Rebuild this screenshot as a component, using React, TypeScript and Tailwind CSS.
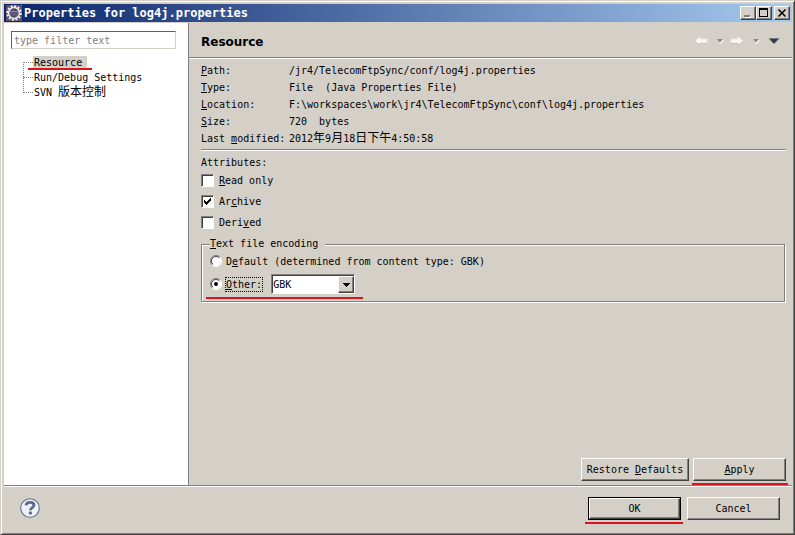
import { useState, type ReactNode } from "react";

const raised =
  "bg-[#d4d0c8] border border-t-white border-l-white border-r-[#404040] border-b-[#404040] shadow-[inset_-1px_-1px_0_#808080]";
const sunken =
  "bg-white border border-t-[#808080] border-l-[#808080] border-r-white border-b-white shadow-[inset_1px_1px_0_#404040]";

const properties = [
  { key: "P", before: "", after: "ath:", value: "/jr4/TelecomFtpSync/conf/log4j.properties" },
  { key: "T", before: "", after: "ype:", value: "File  (Java Properties File)" },
  {
    key: "L",
    before: "",
    after: "ocation:",
    value: "F:\\workspaces\\work\\jr4\\TelecomFtpSync\\conf\\log4j.properties",
  },
  { key: "S", before: "", after: "ize:", value: "720  bytes" },
  { key: "m", before: "Last ", after: "odified:", value: "2012年9月18日下午4:50:58" },
];

// Chinese characters are two columns wide, so they get a larger size
function Mixed({ text }: { text: string }) {
  return (
    <>
      {text.split(/([\u4e00-\u9fff]+)/).map((part, i) =>
        i % 2 ? (
          <span key={i} className="text-[12px]">
            {part}
          </span>
        ) : (
          part
        )
      )}
    </>
  );
}

function RedLine({ className }: { className: string }) {
  return <span aria-hidden="true" className={`absolute h-[2px] bg-[#d8141c] ${className}`} />;
}

function Separator() {
  return <div className="h-[2px] shrink-0 border-t border-b border-t-[#808080] border-b-white" />;
}

function EclipseIcon() {
  return (
    <svg viewBox="0 0 16 16" className="w-4 h-4 shrink-0">
      <rect width="16" height="16" fill="#5a5272" />
      <circle cx="8" cy="8" r="6.8" fill="none" stroke="#f6f0e6" strokeWidth="2" strokeDasharray="2 1.56" />
      <circle cx="8" cy="8" r="5.4" fill="#4a4468" stroke="#f0ebe4" strokeWidth="1.5" />
      <path d="M4.2 6.4h7.6" stroke="#a09ab4" strokeWidth="1" />
      <path d="M3.8 8.2h8.4M4.2 9.9h7.6" stroke="#77708f" strokeWidth="0.8" />
    </svg>
  );
}

function TitleBar() {
  const button = `${raised} h-[14px] flex items-center justify-center`;
  return (
    <header className="h-[18px] shrink-0 flex items-center px-[2px] bg-linear-to-r/srgb from-[#0a246a] to-[#a6caf0]">
      <EclipseIcon />
      <h1 className="flex-1 pl-[2px] text-[12px] leading-[18px] font-bold text-white whitespace-nowrap">
        Properties for log4j.properties
      </h1>
      <div className="flex">
        <button aria-label="Minimize" className={`${button} w-4`}>
          <svg viewBox="0 0 12 10" className="w-3 h-[10px]">
            <path d="M3 8h6v2H3z" fill="#fff" />
            <path d="M2 7h6v2H2z" fill="#808080" />
          </svg>
        </button>
        <button aria-label="Maximize" className={`${button} w-4`}>
          <svg viewBox="0 0 12 10" className="w-3 h-[10px]" shapeRendering="crispEdges">
            <path d="M1 0h9v9H1zM2 2v6h7V2z" fillRule="evenodd" fill="#000" />
          </svg>
        </button>
        <button aria-label="Close" className={`${button} w-4 ml-[2px]`}>
          <svg viewBox="0 0 12 10" className="w-3 h-[10px]">
            <path d="M2.5 1.5l7 7M9.5 1.5l-7 7" stroke="#000" strokeWidth="1.6" />
          </svg>
        </button>
      </div>
    </header>
  );
}

function Sidebar() {
  return (
    <aside className="w-[184px] shrink-0 bg-white pt-2 pl-[7px] pr-3">
      <input
        type="text"
        aria-label="Filter"
        placeholder="type filter text"
        className="block w-full h-[18px] px-[2px] bg-white border border-t-[#606060] border-l-[#606060] border-r-[#d4d0c8] border-b-[#d4d0c8] placeholder:text-[#808080] outline-none"
      />
      <ul className="relative mt-[6px] ml-3 leading-[15px]">
        <li className="relative flex items-center h-[15px]">
          <span className="w-[10px] border-t border-dotted border-[#808080]" />
          <a href="#resource" className="h-[14px] leading-[14px] pl-[1px] pr-[5px] bg-[#d4d0c8]">
            Resource
          </a>
          <RedLine className="left-[5px] top-[13px] w-16" />
        </li>
        <li className="flex items-center h-[15px]">
          <span className="w-[10px] border-t border-dotted border-[#808080]" />
          <a href="#run-debug" className="pl-[1px]">
            Run/Debug Settings
          </a>
        </li>
        <li className="flex items-center h-[15px]">
          <span className="w-[10px] border-t border-dotted border-[#808080]" />
          <a href="#svn" className="pl-[1px]">
            <Mixed text="SVN 版本控制" />
          </a>
        </li>
        <li aria-hidden="true" className="absolute left-0 top-[7px] bottom-[7px] border-l border-dotted border-[#808080]" />
      </ul>
    </aside>
  );
}

function Chevron() {
  return (
    <svg viewBox="0 0 8 6" className="w-2 h-[6px]">
      <path d="M3.5 5.4L7 1.4v1.4L4.6 5.6z" fill="#fff" stroke="#fff" strokeWidth="0.6" />
      <path d="M1 1h6L4 4.6z" fill="#8a8784" />
    </svg>
  );
}

function PageHeader() {
  return (
    <div className="h-[34px] shrink-0 flex items-center justify-between pl-3 pr-3">
      <h2 className="pt-[3px] font-['DejaVu_Sans','Liberation_Sans',sans-serif] text-[12px] leading-[18px] font-bold">
        Resource
      </h2>
      <div className="flex items-center pt-[2px]">
        <button aria-label="Back">
          <svg viewBox="0 0 14 12" className="w-[14px] h-3">
            <path d="M1 6l5-4.6V4h7v4H6v2.6z" fill="#f8f7f4" stroke="#e9e6e0" strokeWidth="0.8" />
            <path d="M1.4 6.6l4.4 4.2V8.4H13" fill="none" stroke="#bdb9b1" strokeWidth="0.8" />
          </svg>
        </button>
        <button aria-label="Back history" className="ml-2">
          <Chevron />
        </button>
        <button aria-label="Forward" className="ml-[6px]">
          <svg viewBox="0 0 14 12" className="w-[14px] h-3">
            <path d="M13 6L8 1.4V4H1v4h7v2.6z" fill="#f8f7f4" stroke="#e9e6e0" strokeWidth="0.8" />
            <path d="M1 8.4h7.2v2.4l4.4-4.2" fill="none" stroke="#bdb9b1" strokeWidth="0.8" />
          </svg>
        </button>
        <button aria-label="Forward history" className="ml-2">
          <Chevron />
        </button>
        <button aria-label="View menu" className="ml-2">
          <svg viewBox="0 0 12 8" className="w-3 h-2">
            <path d="M1 1.5h10L6 6.7z" fill="#34324f" stroke="#6f6d80" strokeWidth="0.5" />
          </svg>
        </button>
      </div>
    </div>
  );
}

function CheckBox({ label, initial = false }: { label: ReactNode; initial?: boolean }) {
  const [checked, setChecked] = useState(initial);
  return (
    <label className="flex items-center h-[21px]">
      <span className="relative flex">
        <input
          type="checkbox"
          checked={checked}
          onChange={(e) => setChecked(e.target.checked)}
          className={`${sunken} appearance-none w-[13px] h-[13px]`}
        />
        {checked && (
          <svg viewBox="0 0 13 13" className="absolute inset-0 w-[13px] h-[13px] pointer-events-none" shapeRendering="crispEdges">
            <path d="M3 5h1v1h1v1h1V6h1V5h1V4h1V3h1v3H9v1H8v1H7v1H6v1H5V9H4V8H3z" fill="#000" />
          </svg>
        )}
      </span>
      <span className="pl-[5px]">{label}</span>
    </label>
  );
}

type RadioProps = { id: string; checked: boolean; onSelect: () => void };

function Radio({ id, checked, onSelect }: RadioProps) {
  return (
    <span className="relative flex w-3 h-3 shrink-0">
      <input
        type="radio"
        id={id}
        name="encoding"
        checked={checked}
        onChange={onSelect}
        className="appearance-none w-3 h-3 rounded-full"
      />
      <svg viewBox="0 0 12 12" className="absolute inset-0 w-3 h-3 pointer-events-none">
        <circle cx="6" cy="6" r="5" fill="#fff" />
        <path d="M2 10A5.5 5.5 0 0 1 10 2" fill="none" stroke="#808080" />
        <path d="M2.8 9.2A4.5 4.5 0 0 1 9.2 2.8" fill="none" stroke="#404040" />
        <path d="M10 2A5.5 5.5 0 0 1 2 10" fill="none" stroke="#fff" />
        {checked && <circle cx="6" cy="6" r="2" fill="#000" />}
      </svg>
    </span>
  );
}

function Encoding() {
  const [mode, setMode] = useState("other");
  return (
    <fieldset className="relative min-w-0 mt-1 mr-[7px] pl-2 pb-1 border border-[#808080] shadow-[1px_1px_0_#fff,inset_1px_1px_0_#fff]">
      <legend className="h-[14px] leading-[14px] pr-[7px] bg-[#d4d0c8]">
        <u>T</u>ext file encoding
      </legend>
      <div className="flex items-center h-5">
        <Radio id="enc-default" checked={mode === "default"} onSelect={() => setMode("default")} />
        <label htmlFor="enc-default" className="pl-1">
          D<u>e</u>fault (determined from content type: GBK)
        </label>
      </div>
      <div className="flex items-center h-[26px]">
        <Radio id="enc-other" checked={mode === "other"} onSelect={() => setMode("other")} />
        <label htmlFor="enc-other" className="ml-[3px] h-[15px] leading-[13px] border border-dotted border-black">
          <u>O</u>ther:
        </label>
        <div className="relative ml-2">
          <select
            aria-label="Other encoding"
            defaultValue="GBK"
            className={`${sunken} block appearance-none w-[84px] h-5 pl-[1px] pr-5 outline-none`}
          >
            <option>GBK</option>
            <option>UTF-8</option>
            <option>ISO-8859-1</option>
          </select>
          <span
            className={`${raised} absolute right-[1px] top-[2px] bottom-[1px] w-4 flex items-center justify-center pointer-events-none`}
          >
            <svg viewBox="0 0 7 4" className="w-[7px] h-1" shapeRendering="crispEdges">
              <path d="M0 0h7v1H6v1H5v1H4v1H3V3H2V2H1V1H0z" fill="#000" />
            </svg>
          </span>
        </div>
      </div>
      <RedLine className="left-1 bottom-[2px] w-[157px]" />
    </fieldset>
  );
}

function HelpIcon() {
  return (
    <svg viewBox="0 0 20 20" className="w-5 h-5">
      <circle cx="10" cy="10" r="9.3" fill="#eef1f6" stroke="#5f6f8c" strokeWidth="1.1" />
      <path
        d="M6 7.4C6.2 5.2 7.8 4.3 10.1 4.3c2.3 0 3.9 1 3.9 2.9 0 2.4-3.6 2.3-3.6 5"
        fill="none"
        stroke="#5b6a8c"
        strokeWidth="2.8"
      />
      <rect x="8.9" y="13.6" width="3" height="2.9" rx="0.8" fill="#5b6a8c" />
    </svg>
  );
}

export default function App() {
  return (
    <div className="min-h-screen flex flex-col bg-[#d4d0c8] border border-t-[#d4d0c8] border-l-[#d4d0c8] border-r-[#404040] border-b-[#404040] shadow-[inset_1px_1px_0_#fff,inset_-1px_-1px_0_#808080] p-[3px] pr-[2px] text-black text-[10px] leading-[17px] font-['DejaVu_Sans_Mono','Noto_Sans_CJK_SC',monospace]">
      <TitleBar />
      <div className="flex-1 flex mt-[1px]">
        <Sidebar />
        <main className="flex-1 min-w-0 flex flex-col border-l border-[#808080]">
          <PageHeader />
          <Separator />
          <div className="flex-1 flex flex-col pl-3 pt-[3px] pb-1">
            <dl>
              {properties.map((p) => (
                <div key={p.key} className="flex h-[17px] whitespace-pre">
                  <dt className="w-[88px] shrink-0">
                    {p.before}
                    <u>{p.key}</u>
                    {p.after}
                  </dt>
                  <dd>
                    <Mixed text={p.value} />
                  </dd>
                </div>
              ))}
            </dl>
            <div className="mt-[2px] mb-[3px] mr-[6px]">
              <Separator />
            </div>
            <p className="h-4">Attributes:</p>
            <CheckBox label={<><u>R</u>ead only</>} />
            <CheckBox initial label={<>Ar<u>c</u>hive</>} />
            <CheckBox label={<>Deri<u>v</u>ed</>} />
            <Encoding />
            <div className="mt-auto flex justify-end gap-1 pr-[6px]">
              <button className={`${raised} w-[108px] h-[23px]`}>
                Restore <u>D</u>efaults
              </button>
              <div className="relative">
                <button className={`${raised} w-[93px] h-[23px]`}>
                  <u>A</u>pply
                </button>
                <RedLine className="-left-[1px] top-[25px] w-24" />
              </div>
            </div>
          </div>
        </main>
      </div>
      <Separator />
      <footer className="h-11 shrink-0 flex items-center justify-between pb-[2px] pl-4 pr-3">
        <button aria-label="Help">
          <HelpIcon />
        </button>
        <div className="flex gap-[6px]">
          <div className="relative flex border border-black">
            <button className={`${raised} w-[91px] h-[21px]`}>OK</button>
            <RedLine className="-left-1 -bottom-[5px] w-[98px]" />
          </div>
          <button className={`${raised} w-[93px] h-[23px]`}>Cancel</button>
        </div>
      </footer>
    </div>
  );
}
